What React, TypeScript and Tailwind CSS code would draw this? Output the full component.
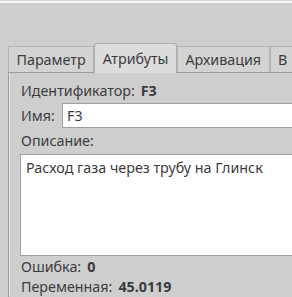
const tabs = ["Параметр", "Атрибуты", "Архивация", "В"];

export default function App() {
  return (
    <div className="w-[292px] h-[297px] overflow-hidden bg-[#cecece] text-[14.3px] text-[#3c3c3c] font-['Noto_Sans',sans-serif]">
      <div className="h-[1px] bg-[#d6d6d6]" />
      <div className="h-[2px] bg-[#f4f4f4]" />
      <div className="flex items-end pl-[8px] pt-[40px] whitespace-nowrap">
        {tabs.map((t, i) =>
          i === 1 ? (
            <div
              key={t}
              className="h-[30px] px-[7.5px] flex items-center shrink-0 bg-[#dcdcdc] border border-b-0 border-[#ababab] rounded-t-[3px] -mb-[1px] relative z-10"
            >
              {t}
            </div>
          ) : (
            <div
              key={t}
              className="h-[26px] px-[7.5px] flex items-center shrink-0 bg-[#d3d3d3] border border-b-0 border-[#b4b4b4]"
            >
              {t}
            </div>
          )
        )}
      </div>
      <div className="ml-[8px] border-t border-l border-[#9c9c9c] h-[300px]">
        <div className="border-l border-[#e6e6e6] pl-[10px] pt-[7px]">
          <div className="h-[22px] flex items-center gap-[6px] pl-[1px]">
            <span>Идентификатор:</span>
            <span className="font-bold">F3</span>
          </div>
          <div className="flex items-center pl-[1px] mt-[1px]">
            <span className="w-[41px]">Имя:</span>
            <div className="flex-1 h-[25px] bg-white border border-[#a0a0a0] border-r-0 flex items-center pl-[4px]">
              F3
            </div>
          </div>
          <div className="h-[26px] flex items-center pl-[1px]">Описание:</div>
          <div className="h-[102px] bg-white border border-[#a0a0a0] border-r-0 pl-[5px] pt-[2px]">
            Расход газа через трубу на Глинск
          </div>
          <div className="h-[20px] flex items-center gap-[6px] pl-[1px] mt-[1px]">
            <span>Ошибка:</span>
            <span className="font-bold">0</span>
          </div>
          <div className="h-[19px] flex items-center gap-[6px] pl-[1px]">
            <span>Переменная:</span>
            <span className="font-bold">45.0119</span>
          </div>
        </div>
      </div>
    </div>
  );
}
